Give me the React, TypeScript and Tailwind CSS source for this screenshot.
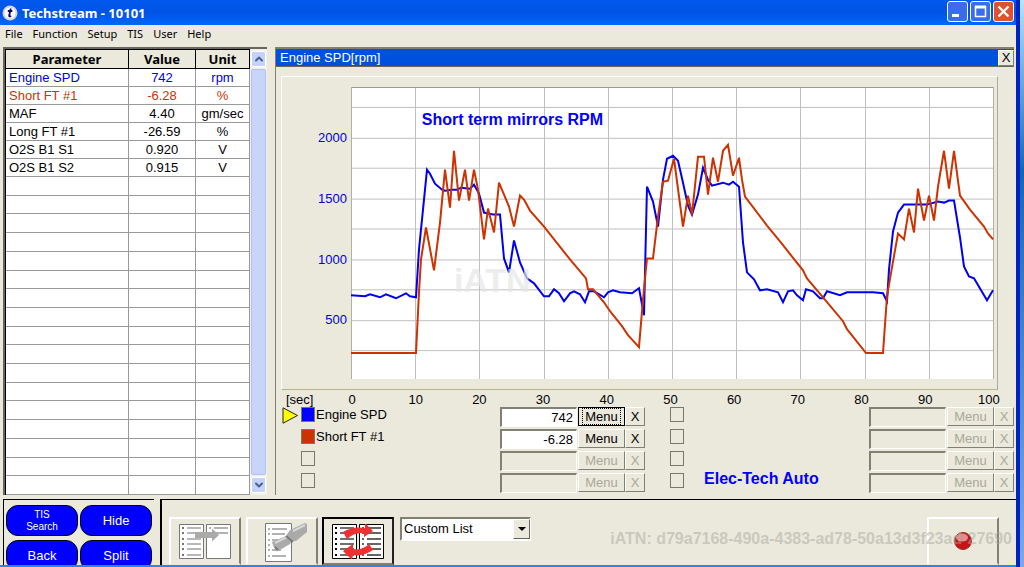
import { ChevronDown, ChevronUp } from "lucide-react";

interface Parameter {
  name: string;
  value: string;
  unit: string;
  color: string;
}

interface Channel {
  id: number;
  name?: string;
  value?: string;
  swatch?: string;
  selected?: boolean;
}

const menuItems = ["File", "Function", "Setup", "TIS", "User", "Help"];

const parameters: Parameter[] = [
  { name: "Engine SPD", value: "742", unit: "rpm", color: "text-[#0000e6]" },
  { name: "Short FT #1", value: "-6.28", unit: "%", color: "text-[#cc3300]" },
  { name: "MAF", value: "4.40", unit: "gm/sec", color: "text-black" },
  { name: "Long FT #1", value: "-26.59", unit: "%", color: "text-black" },
  { name: "O2S B1 S1", value: "0.920", unit: "V", color: "text-black" },
  { name: "O2S B1 S2", value: "0.915", unit: "V", color: "text-black" },
];

const EMPTY_ROWS = 17;

const leftChannels: Channel[] = [
  { id: 1, name: "Engine SPD", value: "742", swatch: "bg-[#0000ff]", selected: true },
  { id: 2, name: "Short FT #1", value: "-6.28", swatch: "bg-[#cc3300]" },
  { id: 3 },
  { id: 4 },
];

const rightChannels: Channel[] = [{ id: 5 }, { id: 6 }, { id: 7 }, { id: 8 }];

const rpmLabels = [2000, 1500, 1000, 500];
const secLabels = [0, 10, 20, 30, 40, 50, 60, 70, 80, 90, 100];

const gridX = [64, 128, 193, 257, 321, 385, 449, 514, 578];
const gridY = [20, 51, 81, 112, 142, 173, 203, 234, 264];

const engineSpeed =
  "0,209 14,210 19,208 29,211 35,208 45,212 55,207 59,210 65,211 68,163 72,123 76,83 79,87 84,97 91,103 94,104 101,103 106,103 110,101 119,102 123,98 128,107 133,126 137,127 142,128 149,128 153,172 158,186 163,154 169,176 176,192 183,197 193,210 198,210 203,203 208,207 213,215 219,207 223,205 229,208 234,216 238,205 243,205 253,211 257,206 262,204 269,206 281,207 288,202 293,229 296,100 302,115 307,140 312,93 316,72 322,69 327,74 332,96 337,119 341,128 347,108 352,81 357,93 361,99 372,96 378,98 382,95 388,100 392,156 396,186 403,193 409,204 416,203 427,206 432,216 437,205 442,204 446,209 452,214 455,203 462,205 469,212 472,212 476,205 489,209 496,206 522,206 532,207 536,215 538,183 542,145 547,126 553,118 576,118 587,115 593,116 598,114 603,114 609,151 613,180 618,190 623,192 636,214 642,204";

const shortTrim =
  "0,267 65,267 68,206 70,173 75,141 83,184 89,136 94,83 99,121 103,64 108,114 114,83 118,114 123,83 127,103 133,153 137,122 143,146 148,96 158,120 163,140 169,109 173,113 179,124 193,140 219,173 235,192 237,203 242,203 253,216 259,225 271,240 277,249 288,261 292,213 296,172 302,172 307,130 312,95 317,94 323,72 332,140 337,109 341,128 347,70 353,70 357,108 362,71 367,95 372,64 377,58 382,89 388,71 391,93 394,110 416,139 429,155 452,184 456,192 472,211 492,235 496,243 515,267 532,267 536,210 541,181 547,147 553,153 558,122 563,146 567,102 573,134 578,109 583,134 587,100 593,64 598,102 603,64 609,109 619,123 633,140 637,147 642,153";

function TitleBar() {
  const control =
    "flex h-[21px] w-[21px] items-center justify-center rounded-[3px] border border-white";
  return (
    <header className="flex h-[25px] shrink-0 items-center bg-linear-to-b from-[#0058ee] via-[#0054e3] to-[#0066ff] pr-[2px] pl-[2px]">
      <svg width="16" height="16" viewBox="0 0 16 16" aria-hidden="true">
        <circle cx="8" cy="8" r="7.5" fill="#d4d4d4" />
        <circle cx="8" cy="8" r="5.5" fill="#fff" />
        <path
          d="M8.8 3.5 7.2 10.5Q7 12 9.2 11.2M5.8 6h4.6"
          fill="none"
          stroke="#0a0a6e"
          strokeWidth="1.8"
        />
      </svg>
      <h1 className="ml-1 grow font-['Noto_Sans','Open_Sans',sans-serif] text-[13px] leading-4 font-bold text-white">
        Techstream - 10101
      </h1>
      <div className="flex gap-[2px] pb-[2px]">
        <button aria-label="Minimize" className={`${control} bg-[#3a6ee8]`}>
          <svg width="13" height="13" viewBox="0 0 13 13">
            <path d="M1 10.5h7" stroke="#fff" strokeWidth="3" />
          </svg>
        </button>
        <button aria-label="Maximize" className={`${control} bg-[#3a6ee8]`}>
          <svg width="13" height="13" viewBox="0 0 13 13">
            <path d="M1.5 1v10.5h10V1" fill="none" stroke="#fff" strokeWidth="1.5" />
            <path d="M1 2h11" stroke="#fff" strokeWidth="3" />
          </svg>
        </button>
        <button aria-label="Close" className={`${control} bg-[#e2512d]`}>
          <svg width="13" height="13" viewBox="0 0 13 13">
            <path d="m1.5 1.5 10 10m0-10-10 10" stroke="#fff" strokeWidth="2.4" />
          </svg>
        </button>
      </div>
    </header>
  );
}

function ParameterTable() {
  const head =
    "h-[19px] border-r border-b border-black bg-[#ebe8dc] p-0 font-['Noto_Sans','Open_Sans',sans-serif] text-[13px] leading-4 font-bold";
  const cell = "border-r border-b border-[#999] p-0";
  return (
    <section className="flex w-[264px] shrink-0 border-t-2 border-l-2 border-[#66665c] bg-white">
      <table className="h-full grow table-fixed border-separate border-spacing-0 border-t border-l border-black">
        <thead>
          <tr>
            <th className={`${head} w-[123px]`}>Parameter</th>
            <th className={`${head} w-[67px]`}>Value</th>
            <th className={head}>Unit</th>
          </tr>
        </thead>
        <tbody>
          {parameters.map((row) => (
            <tr key={row.name} className={`h-[18px] leading-4 ${row.color}`}>
              <td className={`${cell} pl-[3px]`}>{row.name}</td>
              <td className={`${cell} text-center`}>{row.value}</td>
              <td className={`${cell} text-center`}>{row.unit}</td>
            </tr>
          ))}
          {Array.from({ length: EMPTY_ROWS }, (_, i) => (
            <tr key={i}>
              <td className={cell}></td>
              <td className={cell}></td>
              <td className={cell}></td>
            </tr>
          ))}
        </tbody>
      </table>
      <div className="flex w-[17px] shrink-0 flex-col items-center gap-[2px] bg-[#f3f1ec] py-[2px]">
        <button
          aria-label="Scroll up"
          className="flex h-4 w-[15px] items-center justify-center rounded-[2px] border border-white bg-[#c3d3fc] text-[#4d6185]"
        >
          <ChevronUp size={12} strokeWidth={4} />
        </button>
        <div className="w-[15px] grow rounded-[2px] border border-[#b0c0f0] bg-[#c8d4fb]"></div>
        <button
          aria-label="Scroll down"
          className="flex h-4 w-[15px] items-center justify-center rounded-[2px] border border-white bg-[#c3d3fc] text-[#4d6185]"
        >
          <ChevronDown size={12} strokeWidth={4} />
        </button>
      </div>
    </section>
  );
}

function Plot() {
  return (
    <div className="relative min-w-0 grow">
      <svg
        className="block h-full w-full bg-white"
        viewBox="0 0 643 293"
        preserveAspectRatio="none"
        role="img"
        aria-label="Engine speed and short fuel trim over 100 seconds"
      >
        {gridX.map((x) => (
          <path key={x} d={`M${x + 0.5} 0V293`} stroke="#c0c0c0" />
        ))}
        {gridY.map((y) => (
          <path key={y} d={`M0 ${y + 0.5}H643`} stroke="#c0c0c0" />
        ))}
        <path d="M0 .5H643" stroke="#999" />
        <path d="M.5 0V293M642.5 0V293" stroke="#b0b0a8" />
        <polyline points={engineSpeed} fill="none" stroke="#0000f0" strokeWidth="2" />
        <polyline points={shortTrim} fill="none" stroke="#cc3300" strokeWidth="2" />
      </svg>
      <p className="absolute top-[8%] left-[11%] text-[16px] leading-5 font-bold whitespace-nowrap text-[#0000ff]">
        Short term mirrors RPM
      </p>
      <p className="absolute top-[60%] left-[16%] text-[34px] leading-9 font-bold text-[#e4e6e6]/70">
        iATN
      </p>
    </div>
  );
}

function ChannelRow({ channel }: { channel: Channel }) {
  const off = !channel.name;
  const button =
    "h-[19px] border border-t-white border-l-white border-r-[#808074] border-b-[#808074] bg-[#ebe8dc] leading-4";
  return (
    <div className="flex h-[22px] items-start pl-[6px]">
      <div className="w-[19px] shrink-0">
        {channel.selected && (
          <svg width="17" height="17" viewBox="0 0 17 17" aria-hidden="true">
            <path d="M1 .8v15.4L15.5 8.5Z" fill="#ffff00" stroke="#222" />
          </svg>
        )}
      </div>
      <span
        className={`h-[15px] w-[14px] shrink-0 border border-[#77776c] ${channel.swatch ?? ""}`}
      ></span>
      <label htmlFor={`channel-${channel.id}`} className="grow pl-px leading-4">
        {channel.name}
      </label>
      <input
        id={`channel-${channel.id}`}
        aria-label={channel.name ?? `Channel ${channel.id}`}
        readOnly
        disabled={off}
        defaultValue={channel.value}
        className={`h-[20px] w-[77px] border border-t-2 border-l-2 border-t-[#808074] border-r-white border-b-white border-l-[#808074] pr-[3px] text-right ${off ? "bg-[#ebe8dc]" : "bg-white"}`}
      />
      <button
        disabled={off}
        className={`${button} ml-px w-[47px] ${off ? "text-[#aaa899]" : ""} ${channel.selected ? "outline outline-black -outline-offset-1" : ""}`}
      >
        {channel.selected ? (
          <span className="border border-dotted border-black px-[2px] leading-3">Menu</span>
        ) : (
          "Menu"
        )}
      </button>
      <button disabled={off} className={`${button} w-[20px] ${off ? "text-[#aaa899]" : ""}`}>
        X
      </button>
    </div>
  );
}

function GraphPanel() {
  return (
    <section className="relative flex min-w-0 grow flex-col border-t-2 border-l border-[#808074]">
      <div className="flex h-[18px] shrink-0 items-center justify-between border-b border-[#66665c] bg-[#0050e0] pl-1 text-white">
        <h2 className="leading-4">Engine SPD[rpm]</h2>
        <button
          aria-label="Close graph"
          className="h-4 w-4 border border-t-white border-l-white border-r-[#808074] border-b-[#808074] bg-[#ebe8dc] leading-3 text-black"
        >
          X
        </button>
      </div>
      <div className="mt-[9px] mr-4 ml-[5px] flex min-h-0 grow border border-t-white border-r-[#aaa] border-b-[#b5b389] border-l-white pt-[10px] pr-[3px] pb-[10px]">
        <div className="flex w-[69px] shrink-0 flex-col pr-1 text-right text-[#0000e6]">
          <div className="grow-[41] basis-0"></div>
          {rpmLabels.map((rpm) => (
            <span key={rpm} className="flex grow-[122] basis-0 items-center justify-end">
              {rpm}
            </span>
          ))}
          <div className="grow-[57] basis-0"></div>
        </div>
        <Plot />
      </div>
      <div className="flex h-[17px] shrink-0 pt-[2px] pr-[13px] pl-[10px] leading-4">
        <span className="w-[54px] shrink-0">[sec]</span>
        <div className="flex grow justify-between">
          {secLabels.map((sec) => (
            <span key={sec} className="w-6 text-center">
              {sec}
            </span>
          ))}
        </div>
      </div>
      <div className="grid h-[88px] shrink-0 grid-cols-2">
        <div>
          {leftChannels.map((channel) => (
            <ChannelRow key={channel.id} channel={channel} />
          ))}
        </div>
        <div>
          {rightChannels.map((channel) => (
            <ChannelRow key={channel.id} channel={channel} />
          ))}
        </div>
      </div>
      <p className="absolute bottom-[6px] left-[58%] text-[16px] leading-5 font-bold text-[#0000ff]">
        Elec-Tech Auto
      </p>
    </section>
  );
}

function ListSheets({ muted }: { muted?: boolean }) {
  const ink = muted ? "#777" : "#000";
  const line = muted ? "#999" : "#333";
  const rows = [4, 9, 15, 20, 25, 31];
  return (
    <>
      <path d="M.5 .5h24v34H.5zM27.5 .5h24v34h-24z" fill="#fff" stroke={ink} />
      {rows.map((y) => (
        <path key={y} d={`M3 ${y}h2`} stroke={ink} strokeWidth="2" />
      ))}
      {rows.map((y) => (
        <path key={y} d={`M8 ${y}h14`} stroke={line} strokeWidth="1.4" />
      ))}
      {(muted ? rows.slice(0, 2) : rows).map((y) => (
        <path key={y} d={`M30 ${y}h2M35 ${y}h14`} stroke={line} strokeWidth="1.4" />
      ))}
    </>
  );
}

function Toolbar() {
  const tool =
    "flex h-12 w-[72px] shrink-0 items-center justify-center border-2 border-t-white border-l-white border-r-[#808074] border-b-transparent";
  return (
    <section className="relative flex min-w-0 grow items-start border-t border-l-2 border-black pt-[17px] pr-[17px] pl-[7px]">
      <button aria-label="Move to list" disabled className={tool}>
        <svg width="52" height="35" viewBox="0 0 52 35">
          <ListSheets muted />
          <path d="M16 8h17V4.5l7 6.5-7 6.5V14H16z" fill="#aaa" />
        </svg>
      </button>
      <button aria-label="Search list" disabled className={`${tool} ml-[5px] pt-1 pl-2`}>
        <svg width="43" height="40" viewBox="0 0 43 40">
          <path d="M.5 .5h26v38H.5z" fill="#fff" stroke="#777" />
          <path
            d="M3 6h2M3 11h2M3 17h2M3 22h2M3 27h2M3 33h2M7 6h15M7 11h13M7 17h8M7 27h9M7 33h14"
            stroke="#999"
            strokeWidth="1.5"
          />
          <path d="M7 19 21 13 25 7 40 0 42 1V9L31 18 27 18 25 21 13 28Q9 27 7 19Z" fill="#aaa" />
          <path d="m10 20 12-6M28 8l12-6" stroke="#d8d8d8" strokeWidth="2" />
          <path d="m21 13 7 6M10 24l3 3" stroke="#777" strokeWidth="2" />
        </svg>
      </button>
      <button
        aria-label="Swap lists"
        className="ml-1 flex h-12 w-[72px] shrink-0 items-center justify-center border-2 border-t-black border-r-[#222] border-b-[#808074] border-l-black"
      >
        <svg width="52" height="35" viewBox="0 0 52 35">
          <ListSheets />
          <path d="M11 8Q21 2 33 4L33-1 41 7 32 13 32 9Q22 8 15 15Z" fill="#ee3030" />
          <path d="M41 26Q31 33 21 31L20 36 11 27 21 20 21 25Q30 27 37 20Z" fill="#ee3030" />
        </svg>
      </button>
      <div className="relative ml-[6px]">
        <select
          aria-label="List"
          defaultValue="Custom List"
          className="h-6 w-[131px] appearance-none border-2 border-t-[#808074] border-r-white border-b-white border-l-[#808074] bg-white pl-[2px] leading-4"
        >
          <option>Custom List</option>
        </select>
        <span className="pointer-events-none absolute top-[2px] right-[1px] flex h-5 w-[17px] items-center justify-center border border-t-white border-r-[#66665c] border-b-[#66665c] border-l-white bg-[#ebe8dc]">
          <svg width="8" height="4" viewBox="0 0 8 4" aria-hidden="true">
            <path d="M0 0h8L4 4z" fill="#000" />
          </svg>
        </span>
      </div>
      <button aria-label="Record" className={`${tool} ml-auto`}>
        <svg width="20" height="20" viewBox="0 0 20 20">
          <circle cx="10" cy="10" r="8.5" fill="#c81414" stroke="#8c3030" />
          <ellipse cx="9" cy="6.5" rx="6" ry="4" fill="#e98a8a" />
        </svg>
      </button>
      <p className="absolute right-1 bottom-4 text-[16px] leading-5 font-bold whitespace-nowrap text-[#a8a8a0]/50">
        iATN: d79a7168-490a-4383-ad78-50a13d3f23ad-27690
      </p>
    </section>
  );
}

function App() {
  const action =
    "h-[31px] rounded-xl border border-black bg-[#0000ff] text-center text-white";
  return (
    <div className="flex h-screen overflow-hidden font-['Liberation_Sans',Arial,sans-serif] text-[13px] text-black">
      <div className="flex min-w-0 grow flex-col border-r-4 border-[#0022c0] bg-[#ebe8dc]">
        <TitleBar />
        <nav className="flex h-[22px] shrink-0 gap-[10px] pt-[1px] pl-[5px] font-['Noto_Sans','Open_Sans',sans-serif] text-[11px] leading-4">
          {menuItems.map((item) => (
            <button key={item} className="h-4">
              {item}
            </button>
          ))}
        </nav>
        <main className="flex min-h-0 grow gap-2 pr-[2px] pb-[4px] pl-[3px]">
          <ParameterTable />
          <GraphPanel />
        </main>
        <footer className="flex h-[66px] shrink-0 gap-[6px] overflow-hidden pl-[3px]">
          <div className="grid w-[151px] shrink-0 auto-rows-[31px] grid-cols-2 gap-x-[2px] gap-y-1 border-t border-l border-black pt-[5px] pr-[2px] pl-[2px]">
            <button className={`${action} text-[10px] leading-3`}>
              TIS
              <br />
              Search
            </button>
            <button className={action}>Hide</button>
            <button className={action}>Back</button>
            <button className={action}>Split</button>
          </div>
          <Toolbar />
        </footer>
        <div className="h-[2px] shrink-0 bg-[#2288ee]"></div>
      </div>
      <div className="w-1 shrink-0 bg-linear-to-b from-[#b5e4fa] via-[#0f66b8] via-30% to-[#7da8e8]"></div>
    </div>
  );
}

export default App;
